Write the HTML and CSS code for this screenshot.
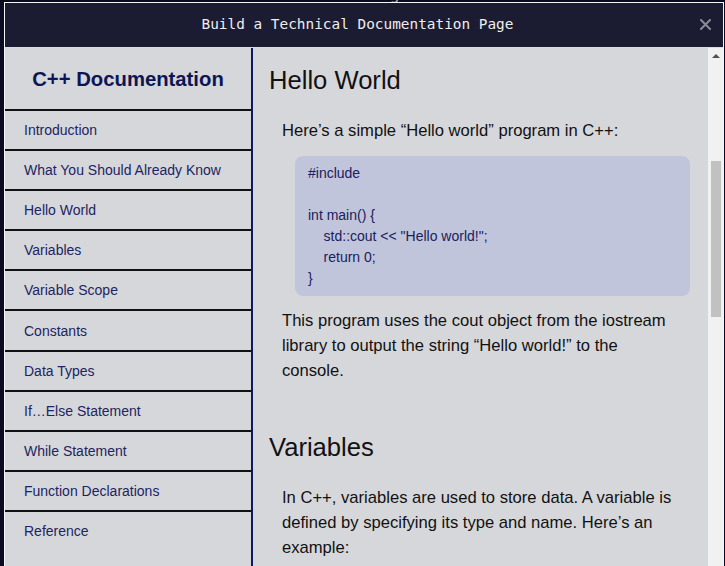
FILE: index.html
```html
<!DOCTYPE html>
<html lang="en">
<head>
<meta charset="utf-8">
<title>Build a Technical Documentation Page</title>
<link rel="stylesheet" href="styles.css">
</head>
<body>
<div class="behind"><span>Technical Docs Page</span></div>
<div class="modal">
  <header class="modal-header">
    <h1 class="modal-title">Build a Technical Documentation Page</h1>
    <button class="close" aria-label="Close">
      <svg width="11" height="11" viewBox="0 0 11 11"><path d="M1 1 L10 10 M10 1 L1 10" stroke="#8a8a96" stroke-width="2" stroke-linecap="square"/></svg>
    </button>
  </header>
  <div class="preview">
    <nav id="navbar" class="navbar">
      <header class="nav-title">C++ Documentation</header>
      <a class="nav-link" href="#Introduction">Introduction</a>
      <a class="nav-link" href="#What_You_Should_Already_Know">What You Should Already Know</a>
      <a class="nav-link" href="#Hello_World">Hello World</a>
      <a class="nav-link" href="#Variables">Variables</a>
      <a class="nav-link" href="#Variable_Scope">Variable Scope</a>
      <a class="nav-link" href="#Constants">Constants</a>
      <a class="nav-link" href="#Data_Types">Data Types</a>
      <a class="nav-link" href="#If_Else_Statement">If…Else Statement</a>
      <a class="nav-link" href="#While_Statement">While Statement</a>
      <a class="nav-link" href="#Function_Declarations">Function Declarations</a>
      <a class="nav-link" href="#Reference">Reference</a>
    </nav>
    <main id="main-doc" class="main-doc">
      <section class="main-section first" id="Hello_World">
        <h2>Hello World</h2>
        <p>Here’s a simple “Hello world” program in C++:</p>
        <pre class="code">#include

int main() {
    std::cout &lt;&lt; "Hello world!";
    return 0;
}</pre>
        <p>This program uses the cout object from the iostream library to output the string “Hello world!” to the console.</p>
      </section>
      <section class="main-section" id="Variables">
        <h2>Variables</h2>
        <p>In C++, variables are used to store data. A variable is defined by specifying its type and name. Here’s an example:</p>
        <pre class="code">int x = 5;
double y = 3.14;</pre>
      </section>
    </main>
    <div class="scrollbar">
      <div class="scroll-up"></div>
      <div class="scroll-thumb"></div>
    </div>
  </div>
</div>
</body>
</html>
```
FILE: styles.css
```css
* { box-sizing: border-box; }

html, body {
  margin: 0;
  padding: 0;
  height: 566px;
  overflow: hidden;
  background: #0a0a23;
}

.behind {
  height: 2px;
  overflow: hidden;
  display: flex;
  justify-content: center;
  padding-right: 90px;
}
.behind span {
  display: block;
  margin-top: -13px;
  font: 16px/16px "DejaVu Sans Mono", monospace;
  color: #b8b8c2;
}

.modal {
  margin-left: 4px;
  width: 720px;
  height: 564px;
  border: 1px solid #f5f6f7;
  border-bottom: 0;
  display: flex;
  flex-direction: column;
  overflow: hidden;
}

.modal-header {
  height: 45px;
  flex: none;
  background: #1b1b32;
  border-bottom: 1px solid #dcdce0;
  display: flex;
  align-items: center;
  padding-left: 10px;
}

.modal-title {
  flex: 1;
  margin: 0 0 3px;
  text-align: center;
  font: 400 14.4px/20px "DejaVu Sans Mono", monospace;
  color: #eeeef0;
}

.close {
  background: none;
  border: 0;
  padding: 0;
  margin: 0 12px 2px 0;
  width: 11px;
  height: 11px;
  display: flex;
}

.preview {
  flex: 1;
  display: flex;
  min-height: 0;
  background: #d6d7db;
  font-family: "Liberation Sans", Arial, sans-serif;
}

.navbar {
  width: 248px;
  flex: none;
  border-right: 2px solid #0a1c5e;
  display: flex;
  flex-direction: column;
}

.nav-title {
  height: 61px;
  display: flex;
  align-items: center;
  justify-content: center;
  font-size: 20.3px;
  font-weight: 700;
  color: #0d1652;
  padding-top: 1px;
}

.nav-link {
  height: 40.1px;
  flex: none;
  border-top: 2px solid #111;
  display: flex;
  align-items: center;
  padding-left: 19px;
  font-size: 14px;
  color: #1d2462;
  text-decoration: none;
}

.main-doc {
  flex: 1;
  min-width: 0;
  overflow: hidden;
  padding: 0 16px;
  color: #111;
}

.main-section h2 {
  margin: 0;
  font-size: 25.6px;
  font-weight: 400;
  line-height: 32px;
}

.main-section.first { margin-top: 16.4px; }
.main-section + .main-section { margin-top: 48.4px; }

.main-section p {
  margin: 22px 13px 0;
  font-size: 16.6px;
  line-height: 25px;
}

.code {
  margin: 13px 2px 11.6px 26px;
  padding: 7px 13px 7px;
  background: #c1c5db;
  border-radius: 8px;
  font-family: "Liberation Sans", Arial, sans-serif;
  font-size: 14px;
  line-height: 21px;
  color: #1a2060;
  white-space: pre-wrap;
}

.code + p { margin-top: 0; }

.scrollbar {
  width: 15px;
  flex: none;
  background: #f1f1f1;
  display: flex;
  flex-direction: column;
  align-items: center;
}

.scroll-up {
  margin-top: 6px;
  width: 0;
  height: 0;
  border-left: 4px solid transparent;
  border-right: 4px solid transparent;
  border-bottom: 4px solid #505050;
}

.scroll-thumb {
  margin-top: 103px;
  width: 10px;
  height: 156px;
  background: #c1c1c1;
}
```
